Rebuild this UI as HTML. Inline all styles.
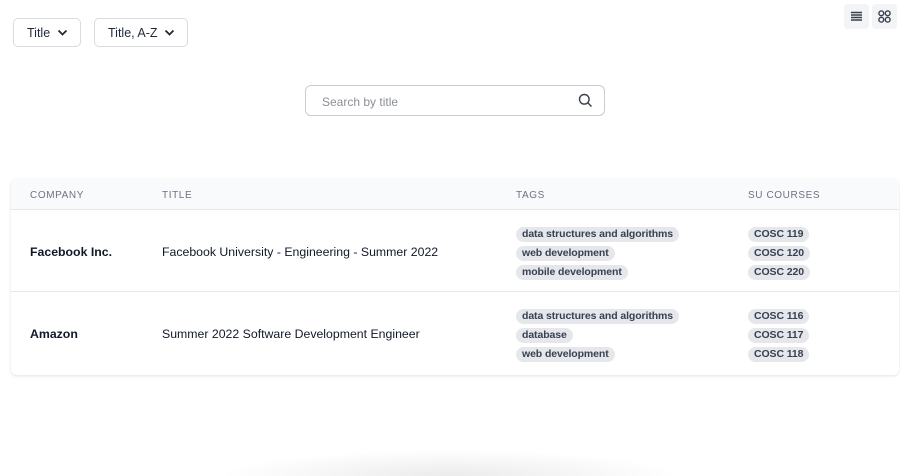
<!DOCTYPE html>
<html><head><style>
*{box-sizing:border-box;margin:0;padding:0}
html,body{width:900px;height:476px;overflow:hidden}
body{background:#fff;font-family:"Liberation Sans",sans-serif;color:#111827;position:relative}
.btn{position:absolute;top:18px;height:29px;border:1px solid #d9dbe0;border-radius:5px;font-size:12.5px;color:#1f2937;display:flex;align-items:center;padding-left:13px}
.btn svg{position:absolute;right:12px;top:10px}
.ic{position:absolute;top:4px;width:25px;height:25px;background:#f3f4f6;border-radius:4px}
.search{position:absolute;left:305px;top:85px;width:300px;height:31px;border:1.5px solid #c9ccd1;border-radius:6px;font-size:12px;color:#8a8f98;padding:9px 0 0 16px}
.card{position:absolute;left:11px;top:179px;width:888px;height:196px;border-radius:6px;box-shadow:0 1px 3px rgba(0,0,0,.12)}
.head{height:31px;background:#f9fafb;border-bottom:1px solid #e5e7eb;border-radius:6px 6px 0 0;position:relative;font-size:10px;letter-spacing:.6px;color:#6b7280}
.head span{position:absolute;top:11px}
.row{position:relative;height:82px;border-bottom:1px solid #e5e7eb;font-size:12.3px}
.row .co{position:absolute;left:19px;top:35px;font-weight:700}
.row .ti{position:absolute;left:151px;top:35px}
.pills{position:absolute;top:17px;display:flex;flex-direction:column;align-items:flex-start;gap:4px}
.p{background:#e5e7eb;color:#374151;font-size:10.5px;font-weight:700;height:15px;line-height:15px;padding:0 6px;border-radius:8px;letter-spacing:-.1px}
.shadow{position:absolute;left:220px;top:450px;width:460px;height:26px;background:radial-gradient(ellipse 50% 100% at 50% 100%,rgba(0,0,0,.08),rgba(0,0,0,0))}
</style></head><body>
<div class="btn" style="left:13px;width:68px">Title<svg width="11" height="8" viewBox="0 0 11 8"><path d="M1.5 1.5 5.5 5.5 9.5 1.5" stroke="#1f2937" stroke-width="1.8" fill="none"/></svg></div>
<div class="btn" style="left:94px;width:94px">Title, A-Z<svg width="11" height="8" viewBox="0 0 11 8"><path d="M1.5 1.5 5.5 5.5 9.5 1.5" stroke="#1f2937" stroke-width="1.8" fill="none"/></svg></div>
<div class="ic" style="left:844px"><svg width="25" height="25" viewBox="0 0 25 25"><path d="M7 8.5h11M7 11h11M7 13.5h11M7 16h11" stroke="#374151" stroke-width="1.5"/></svg></div>
<div class="ic" style="left:872px"><svg width="25" height="25" viewBox="0 0 25 25" fill="none" stroke="#374151" stroke-width="1.4"><circle cx="9.3" cy="9.3" r="2.4"/><circle cx="15.7" cy="9.3" r="2.4"/><circle cx="9.3" cy="15.7" r="2.4"/><circle cx="15.7" cy="15.7" r="2.4"/></svg></div>
<div class="search">Search by title<svg style="position:absolute;right:11px;top:7px" width="15" height="15" viewBox="0 0 15 15" fill="none" stroke="#374151" stroke-width="1.4"><circle cx="6.3" cy="6.3" r="4.8"/><path d="M9.8 9.8 13.5 13.5"/></svg></div>
<div class="card">
<div class="head"><span style="left:19px">COMPANY</span><span style="left:151px">TITLE</span><span style="left:505px">TAGS</span><span style="left:737px">SU COURSES</span></div>
<div class="row"><div class="co">Facebook Inc.</div><div class="ti">Facebook University - Engineering - Summer 2022</div>
<div class="pills" style="left:505px"><div class="p">data structures and algorithms</div><div class="p">web development</div><div class="p">mobile development</div></div>
<div class="pills" style="left:737px"><div class="p">COSC 119</div><div class="p">COSC 120</div><div class="p">COSC 220</div></div></div>
<div class="row" style="border-bottom:none"><div class="co">Amazon</div><div class="ti">Summer 2022 Software Development Engineer</div>
<div class="pills" style="left:505px"><div class="p">data structures and algorithms</div><div class="p">database</div><div class="p">web development</div></div>
<div class="pills" style="left:737px"><div class="p">COSC 116</div><div class="p">COSC 117</div><div class="p">COSC 118</div></div></div>
</div>
<div class="shadow"></div>
</body></html>
